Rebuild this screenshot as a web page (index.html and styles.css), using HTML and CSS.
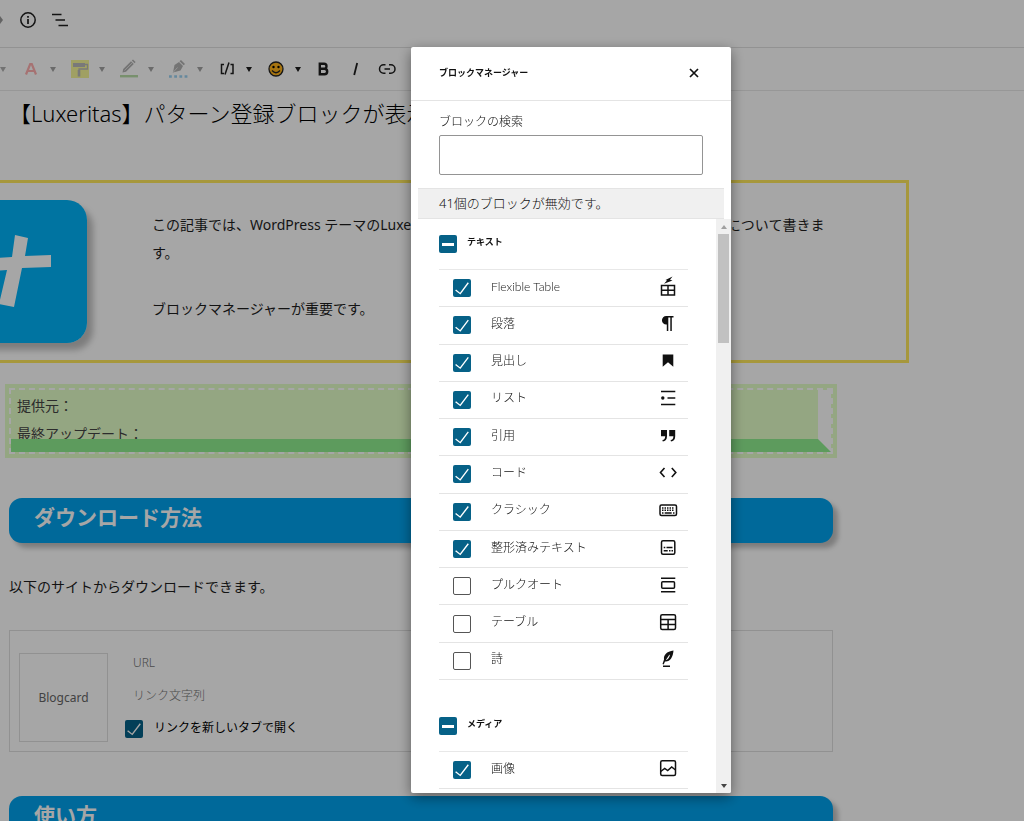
FILE: index.html
```html
<!DOCTYPE html>
<html lang="ja">
<head>
<meta charset="utf-8">
<meta name="viewport" content="width=device-width, initial-scale=1">
<title>ブロックマネージャー</title>
<link rel="stylesheet" href="styles.css">
</head>
<body>
<div class="editor">
  <header class="topbar">
    <span class="redo-tip"></span>
    <button class="icon-button" type="button" aria-label="詳細"><svg width="24" height="24" viewBox="0 0 24 24" fill="none" stroke="currentColor" stroke-width="1.5"><circle cx="12" cy="12" r="7.2"/><path d="M12 11v5M12 8v1.7" stroke-width="1.7"/></svg></button>
    <button class="icon-button" type="button" aria-label="リスト表示"><svg width="24" height="24" viewBox="0 0 24 24" fill="none" stroke="currentColor" stroke-width="1.5"><path d="M3 6.500h9.500M6.500 12h9.500M9.500 17.500h9.500"/></svg></button>
  </header>

  <div class="toolbar" role="toolbar" aria-label="ブロックツール">
    <span class="lead-caret"><i class="caret"></i></span>
    <button class="split faded" type="button" aria-label="文字色"><svg width="24" height="24" viewBox="0 0 24 24" fill="none" stroke="#ff3a3a" stroke-width="2.2"><path d="M7 17.500 11.200 7h1.600L17 17.500M9 14h6"/></svg><i class="caret"></i></button>
    <button class="split faded" type="button" aria-label="背景色"><svg width="24" height="24" viewBox="0 0 24 24"><path fill="#eaea00" d="M3 3h18v18H3z"/><path fill="#555" d="M5 6h12v4H5z"/><path fill="none" stroke="#555" stroke-width="1.300" d="M17 7.500h2.500V12H11v3"/><path fill="#555" d="M9.700 13h2.600v6.500H9.700z"/></svg><i class="caret"></i></button>
    <button class="split faded" type="button" aria-label="マーカー"><svg width="24" height="24" viewBox="0 0 24 24"><path fill="#444" d="M6.200 12 14 4.200l2.800 2.800L9 14.800l-3.500.8zM14.800 3.400 16 2.500l2.600 2.500-1 1.200z"/><path stroke="#ccc" stroke-width=".8" d="m7.500 13.500 7.500-7.500"/><path fill="#4fae28" d="M3 18h18v2.400H3z"/></svg><i class="caret"></i></button>
    <button class="split faded" type="button" aria-label="下線"><svg width="24" height="24" viewBox="0 0 24 24"><path fill="#444" d="M7 15.500 8.500 8l4.500-3 4 4-2.500 4.500zM13.500 4.300 15 3l4 4-1.300 1.300z"/><path stroke="#bbb" d="m7 15.500 4.500-5"/><path d="M3 19.500h18.500" stroke="#0a90e0" stroke-width="2.500" stroke-dasharray="2.800 2.400"/></svg><i class="caret"></i></button>
    <button class="split" type="button" aria-label="ショートコード"><svg width="24" height="24" viewBox="0 0 24 24" fill="none" stroke="currentColor" stroke-width="1.500"><path d="M9 7.500H6.500v9H9M15.500 7.500H18v9h-2.500M14 5.500l-4 12"/></svg><i class="caret"></i></button>
    <button class="split" type="button" aria-label="絵文字"><svg width="24" height="24" viewBox="0 0 24 24"><circle cx="12" cy="12" r="7" fill="#ffb31a" stroke="#222" stroke-width="1.300"/><circle cx="9.500" cy="10" r="1.200"/><circle cx="14.500" cy="10" r="1.200"/><path d="M8 13.500q4 4.500 8 0" fill="none" stroke="#222" stroke-width="1.300"/></svg><i class="caret"></i></button>
    <button class="tool" type="button" aria-label="太字"><svg width="24" height="24" viewBox="0 0 24 24" fill="none" stroke="currentColor" stroke-width="2.400"><path d="M8.800 6.800v10.400h4.700a2.700 2.700 0 0 0 0-5.400H8.800h4.200a2.500 2.500 0 0 0 0-5z"/></svg></button>
    <button class="tool" type="button" aria-label="イタリック"><svg width="24" height="24" viewBox="0 0 24 24" fill="none" stroke="currentColor" stroke-width="1.800"><path d="m14.200 6-3 12"/></svg></button>
    <button class="tool" type="button" aria-label="リンク"><svg width="24" height="24" viewBox="0 0 24 24" fill="none" stroke="currentColor" stroke-width="1.500"><path d="M10.500 7.800H8.700a4.200 4.200 0 0 0 0 8.400h1.800M14 7.800h1.800a4.200 4.200 0 0 1 0 8.400H14M9.500 12h5.500"/></svg></button>
  </div>

  <main class="canvas">
    <h1 class="post-title">【Luxeritas】パターン登録ブロックが表示</h1>

    <section class="callout">
      <svg class="logo" viewBox="0 0 143 143" aria-hidden="true"><path fill="#00b3f7" d="M0 0h143v143H0z"/><path fill="#fff" d="M30 59l38-2 3-22 13 3-3 18 26-1v12l-29 1-8 39-15-3 8-34-33 2z"/></svg>
      <div class="callout-text">
        <p>この記事では、WordPress テーマのLuxeritas の パターン登録ブロックが表示されない問題について書きます。</p>
        <p class="spaced">ブロックマネージャーが重要です。</p>
      </div>
    </section>

    <section class="source-box">
      <div class="source-inner">
        <p>提供元：</p>
        <p>最終アップデート：</p>
      </div>
    </section>

    <h2 class="bar-heading">ダウンロード方法</h2>
    <p class="lead">以下のサイトからダウンロードできます。</p>

    <section class="blogcard">
      <div class="thumb">Blogcard</div>
      <div class="card-fields">
        <input class="card-input" type="text" placeholder="URL" aria-label="URL">
        <input class="card-input" type="text" placeholder="リンク文字列" aria-label="リンク文字列">
        <div class="card-option">
          <input class="check" type="checkbox" id="newtab" checked>
          <label for="newtab">リンクを新しいタブで開く</label>
        </div>
      </div>
    </section>

    <h2 class="bar-heading">使い方</h2>
  </main>
</div>

<div class="overlay">
  <div class="modal" role="dialog" aria-modal="true" aria-labelledby="modal-title">
    <header class="modal-header">
      <h2 class="modal-title" id="modal-title">ブロックマネージャー</h2>
      <button class="close" type="button" aria-label="閉じる"><svg width="24" height="24" viewBox="0 0 24 24" fill="none" stroke="currentColor" stroke-width="1.700"><path d="m8 8 8 8M16 8l-8 8"/></svg></button>
    </header>
    <div class="search">
      <label for="search">ブロックの検索</label>
      <input class="search-input" type="text" id="search">
    </div>
    <p class="notice">41個のブロックが無効です。</p>
    <div class="results">
      <div class="pane">
        <section class="category">
          <div class="category-head">
            <input class="check mixed" type="checkbox" id="cat-text">
            <label for="cat-text">テキスト</label>
          </div>
          <ul class="blocks text-blocks">
            <li><input class="check" type="checkbox" id="b1" checked><label for="b1">Flexible Table<svg viewBox="0 0 24 24" fill="none" stroke="currentColor" stroke-width="1.500"><path d="M5.500 10.500h13v9.500h-13zM5.500 15.200h13M12 10.500v9.500"/><path d="m8 8.800 3-3.300-1.500-.5L16.500 1.500 14 4.800l2.500.7z" fill="currentColor" stroke="none"/></svg></label></li>
            <li><input class="check" type="checkbox" id="b2" checked><label for="b2">段落<svg viewBox="0 0 24 24"><path fill="currentColor" d="M17.500 4v1.500h-1.700V19h-1.500V5.500h-2V19h-1.500v-6.500h-.6a4.250 4.250 0 0 1 0-8.500z"/></svg></label></li>
            <li><input class="check" type="checkbox" id="b3" checked><label for="b3">見出し<svg viewBox="0 0 24 24"><path fill="currentColor" d="M6.700 5.500h10.600v12.200L12 13.300l-5.300 4.400z"/></svg></label></li>
            <li><input class="check" type="checkbox" id="b4" checked><label for="b4">リスト<svg viewBox="0 0 24 24" fill="none" stroke="currentColor" stroke-width="1.500"><path d="M5 5.500h14.300M11.500 12h7.800M5 18.500h14.300"/><circle cx="6.800" cy="12" r="1.700" fill="currentColor" stroke="none"/></svg></label></li>
            <li><input class="check" type="checkbox" id="b5" checked><label for="b5">引用<svg viewBox="0 0 24 24"><path fill="currentColor" d="M5 6h6v6.200c0 3.400-1.600 5-4.200 5.300l-.4-1.500c1.900-.3 2.700-1.400 2.800-3.800H5zM13.200 6h6v6.200c0 3.400-1.600 5-4.200 5.300l-.4-1.500c1.900-.3 2.700-1.400 2.800-3.800h-4.200z"/></svg></label></li>
            <li><input class="check" type="checkbox" id="b6" checked><label for="b6">コード<svg viewBox="0 0 24 24" fill="none" stroke="currentColor" stroke-width="1.600"><path d="m8.500 7-4 4.500 4 4.500M15.800 7l4 4.500-4 4.500"/></svg></label></li>
            <li><input class="check" type="checkbox" id="b7" checked><label for="b7">クラシック<svg viewBox="0 0 24 24" fill="none" stroke="currentColor" stroke-width="1.500"><rect x="4" y="7" width="16.500" height="10.500" rx="1.500"/><path stroke-dasharray="1.500 1" d="M6 10h12.500M6 12.300h12.500"/><path d="M6 15h1.500M8.700 15h7M17 15h1.500"/></svg></label></li>
            <li><input class="check" type="checkbox" id="b8" checked><label for="b8">整形済みテキスト<svg viewBox="0 0 24 24" fill="none" stroke="currentColor" stroke-width="1.500"><rect x="5.500" y="4.700" width="13.300" height="13.500" rx="1.500"/><path d="M7.700 11.500h1.600M10.500 11.500h6M7.700 14.800h4M13 14.800h1.500M15.500 14.800H17"/></svg></label></li>
            <li><input class="check" type="checkbox" id="b9"><label for="b9">プルクオート<svg viewBox="0 0 24 24" fill="none" stroke="currentColor" stroke-width="1.500"><path d="M5 5.200h14.300M5 18.700h14.300"/><rect x="5.700" y="8.800" width="12.800" height="6.500" rx="1"/></svg></label></li>
            <li><input class="check" type="checkbox" id="b10"><label for="b10">テーブル<svg viewBox="0 0 24 24" fill="none" stroke="currentColor" stroke-width="1.500"><rect x="4.700" y="4.700" width="14.800" height="14.800" rx="1.500"/><path d="M4.700 9.500h14.800M4.700 14.500h14.800M12.100 9.500v10"/></svg></label></li>
            <li><input class="check" type="checkbox" id="b11"><label for="b11">詩<svg viewBox="0 0 24 24"><path fill="currentColor" d="M17.500 3.500c-7 1-10 4.500-9.500 9L6.500 17l1.200.4 1.300-3c5 .5 8-4 8.500-10.900zM14 7.500c-.4 3-2 5-4.300 5.700L13 8.300zM7 18.500h7V20H7z" fill-rule="evenodd"/></svg></label></li>
          </ul>
        </section>
        <section class="category">
          <div class="category-head">
            <input class="check mixed" type="checkbox" id="cat-media">
            <label for="cat-media">メディア</label>
          </div>
          <ul class="blocks">
            <li><input class="check" type="checkbox" id="m1" checked><label for="m1">画像<svg viewBox="0 0 24 24" fill="none" stroke="currentColor" stroke-width="1.500"><rect x="4.700" y="3.700" width="14.800" height="14.800" rx="1.500"/><path d="m4.700 14.500 4-3 3 2 4-3.500 3.800 3"/></svg></label></li>
          </ul>
        </section>
      </div>
      <div class="scrollbar" aria-hidden="true">
        <span class="arrow up"></span>
        <span class="thumb-track"><span class="scroll-thumb"></span></span>
        <span class="arrow down"></span>
      </div>
    </div>
  </div>
</div>
</body>
</html>
```
FILE: styles.css
```css
* { box-sizing: border-box; }

html, body { height: 100%; }

body {
  margin: 0;
  overflow: hidden;
  background: #fff;
  color: #1e1e1e;
  font-family: "Noto Sans", "Noto Sans CJK JP", sans-serif;
  font-size: 14px;
  line-height: 28px;
}

h1, h2, p, ul { margin: 0; padding: 0; }

button {
  margin: 0;
  padding: 0;
  border: 0;
  background: none;
  color: inherit;
  font: inherit;
}

svg { display: block; flex: none; }

.editor { height: 100%; overflow: hidden; }

/* Editor bars */
.topbar {
  display: flex;
  align-items: center;
  height: 48px;
  padding-bottom: 7px;
  border-bottom: 1px solid #e0e0e0;
}

.redo-tip {
  border: 4px solid transparent;
  border-left: 3px solid #999;
  border-right: 0;
  margin-right: 8px;
}

.icon-button { width: 33px; display: grid; place-items: center; }

.toolbar {
  display: flex;
  align-items: center;
  height: 43px;
  border-bottom: 1px solid #e8e8e8;
}

.caret {
  border: 3px solid transparent;
  border-top: 5px solid currentColor;
  border-bottom: 0;
}

.lead-caret { display: flex; width: 13px; opacity: .35; }

.split {
  display: flex;
  align-items: center;
  gap: 7px;
  width: 49px;
  padding-left: 6px;
}

.faded { opacity: .4; }

.tool { display: grid; place-items: center; width: 32px; }

/* Post content */
.canvas { padding: 8px 191px 0 9px; }

.post-title {
  font-size: 22px;
  font-weight: 300;
  line-height: 28px;
  white-space: nowrap;
  color: #000;
}

.callout {
  display: flex;
  gap: 65px;
  margin: 53px -76px 0 -80px;
  padding: 17px 72px 17px 12px;
  border: 3px solid #ffe95c;
}

.logo {
  width: 143px;
  height: 143px;
  border-radius: 20px;
  box-shadow: 6px 7px 6px rgba(0, 0, 0, .25);
}

.callout-text { padding-top: 11px; }
.spaced { margin-top: 28px; }

.source-box {
  margin-top: 25px;
  border: 2px dashed #fff;
  background: #e4ffc8;
  box-shadow: 0 0 0 4px #e4ffc8;
}

.source-inner {
  height: 62px;
  overflow: hidden;
  padding: 2px 6px 0;
  border-right: 13px solid #fff;
  border-bottom: 13px solid #90ee90;
  color: #444;
}

.bar-heading {
  margin-top: 44px;
  padding: 3px 25px 10px;
  border-radius: 13px;
  background: #00a2ed;
  box-shadow: 5px 5px 5px rgba(0, 0, 0, .25);
  color: #fff;
  font-size: 21px;
  line-height: 32px;
}

.lead { margin-top: 30px; }

.blogcard {
  display: flex;
  gap: 17px;
  margin-top: 29px;
  padding: 22px 9px 9px;
  border: 1px solid #dfdfdf;
  font-size: 12px;
}

.thumb {
  display: grid;
  place-items: center;
  width: 89px;
  height: 89px;
  border: 1px solid #dfdfdf;
  color: #666;
}

.card-fields { display: flex; flex-direction: column; flex: 1; }

.card-input {
  height: 33px;
  padding: 0 8px 14px;
  border: 0;
  background: none;
  font: inherit;
  font-weight: 300;
}

.card-input::placeholder { color: #757575; }

.card-option {
  display: flex;
  align-items: center;
  gap: 11px;
  height: 20px;
  color: #000;
}

.card-option label { padding-bottom: 2px; }

/* Checkboxes */
.check {
  appearance: none;
  flex: none;
  width: 18px;
  height: 18px;
  margin: 0;
  border: 1px solid #555;
  border-radius: 2px;
  background: #fff;
}

.check:checked, .mixed { border: 0; background: #066187; }

.check:checked::before {
  content: "";
  display: block;
  height: 100%;
  background: #fff;
  clip-path: polygon(82% 18%, 39% 75%, 17% 57%, 12% 63%, 41% 85%, 88% 23%);
}

.mixed { display: grid; place-items: center; }
.mixed::before { content: ""; width: 12px; height: 3px; background: #fff; }

/* Dialog */
.overlay {
  position: fixed;
  inset: 0;
  display: flex;
  justify-content: center;
  padding: 47px 0 28px 118px;
  background: rgba(0, 0, 0, .35);
}

.modal {
  display: flex;
  flex-direction: column;
  width: 320px;
  overflow: hidden;
  border-radius: 2px;
  background: #fff;
  box-shadow: 0 4px 14px rgba(0, 0, 0, .45);
  color: #111;
  font-weight: 300;
}

.modal-header {
  display: flex;
  align-items: center;
  justify-content: space-between;
  height: 54px;
  flex: none;
  padding: 0 25px 2px 28px;
  border-bottom: 1px solid #e4e4e4;
}

.modal-title { font-size: 9px; line-height: 16px; }

.search {
  display: flex;
  flex-direction: column;
  gap: 5px;
  padding: 13px 28px 13px;
  font-size: 12px;
  line-height: 16px;
}

.search-input {
  height: 40px;
  padding: 0 8px;
  border: 1px solid #949494;
  border-radius: 2px;
  font: inherit;
}

.notice {
  margin: 0 7px;
  padding: 0 21px;
  border-top: 1px solid #e4e4e4;
  border-bottom: 1px solid #e4e4e4;
  background: #f0f0f0;
  font-size: 13px;
  line-height: 29px;
}

.results { display: flex; flex: 1; min-height: 0; }

.pane { flex: 1; padding: 0 28px; overflow: hidden; }

.category + .category { margin-top: 21px; }

.category-head {
  display: flex;
  align-items: center;
  gap: 10px;
  height: 50px;
  font-size: 9px;
  font-weight: 700;
  line-height: 12px;
}

.category-head label { padding-bottom: 4px; }

.blocks {
  display: grid;
  grid-auto-rows: minmax(37px, 1fr);
  border-top: 1px solid #e8e8e8;
  list-style: none;
  font-family: Lato, "Noto Sans CJK JP", sans-serif;
  font-size: 12px;
}

.text-blocks { height: 411px; }

.blocks li {
  display: flex;
  align-items: center;
  gap: 20px;
  padding: 0 8px 0 14px;
  border-bottom: 1px solid #e4e4e4;
}

.blocks label {
  display: flex;
  flex: 1;
  align-items: center;
  justify-content: space-between;
  padding-bottom: 3px;
}

.blocks svg { width: 24px; height: 24px; }

.scrollbar {
  display: flex;
  flex-direction: column;
  width: 15px;
  background: #f0f0f0;
}

.arrow { display: grid; place-items: center; height: 15px; }
.arrow::before { content: ""; border: 3px solid transparent; }
.up::before { border-bottom: 4px solid #a0a0a0; border-top: 0; }
.down::before { border-top: 4px solid #444; border-bottom: 0; }

.thumb-track { flex: 1; padding: 0 2px; }
.scroll-thumb { display: block; height: 20%; background: #c1c1c1; }
```
